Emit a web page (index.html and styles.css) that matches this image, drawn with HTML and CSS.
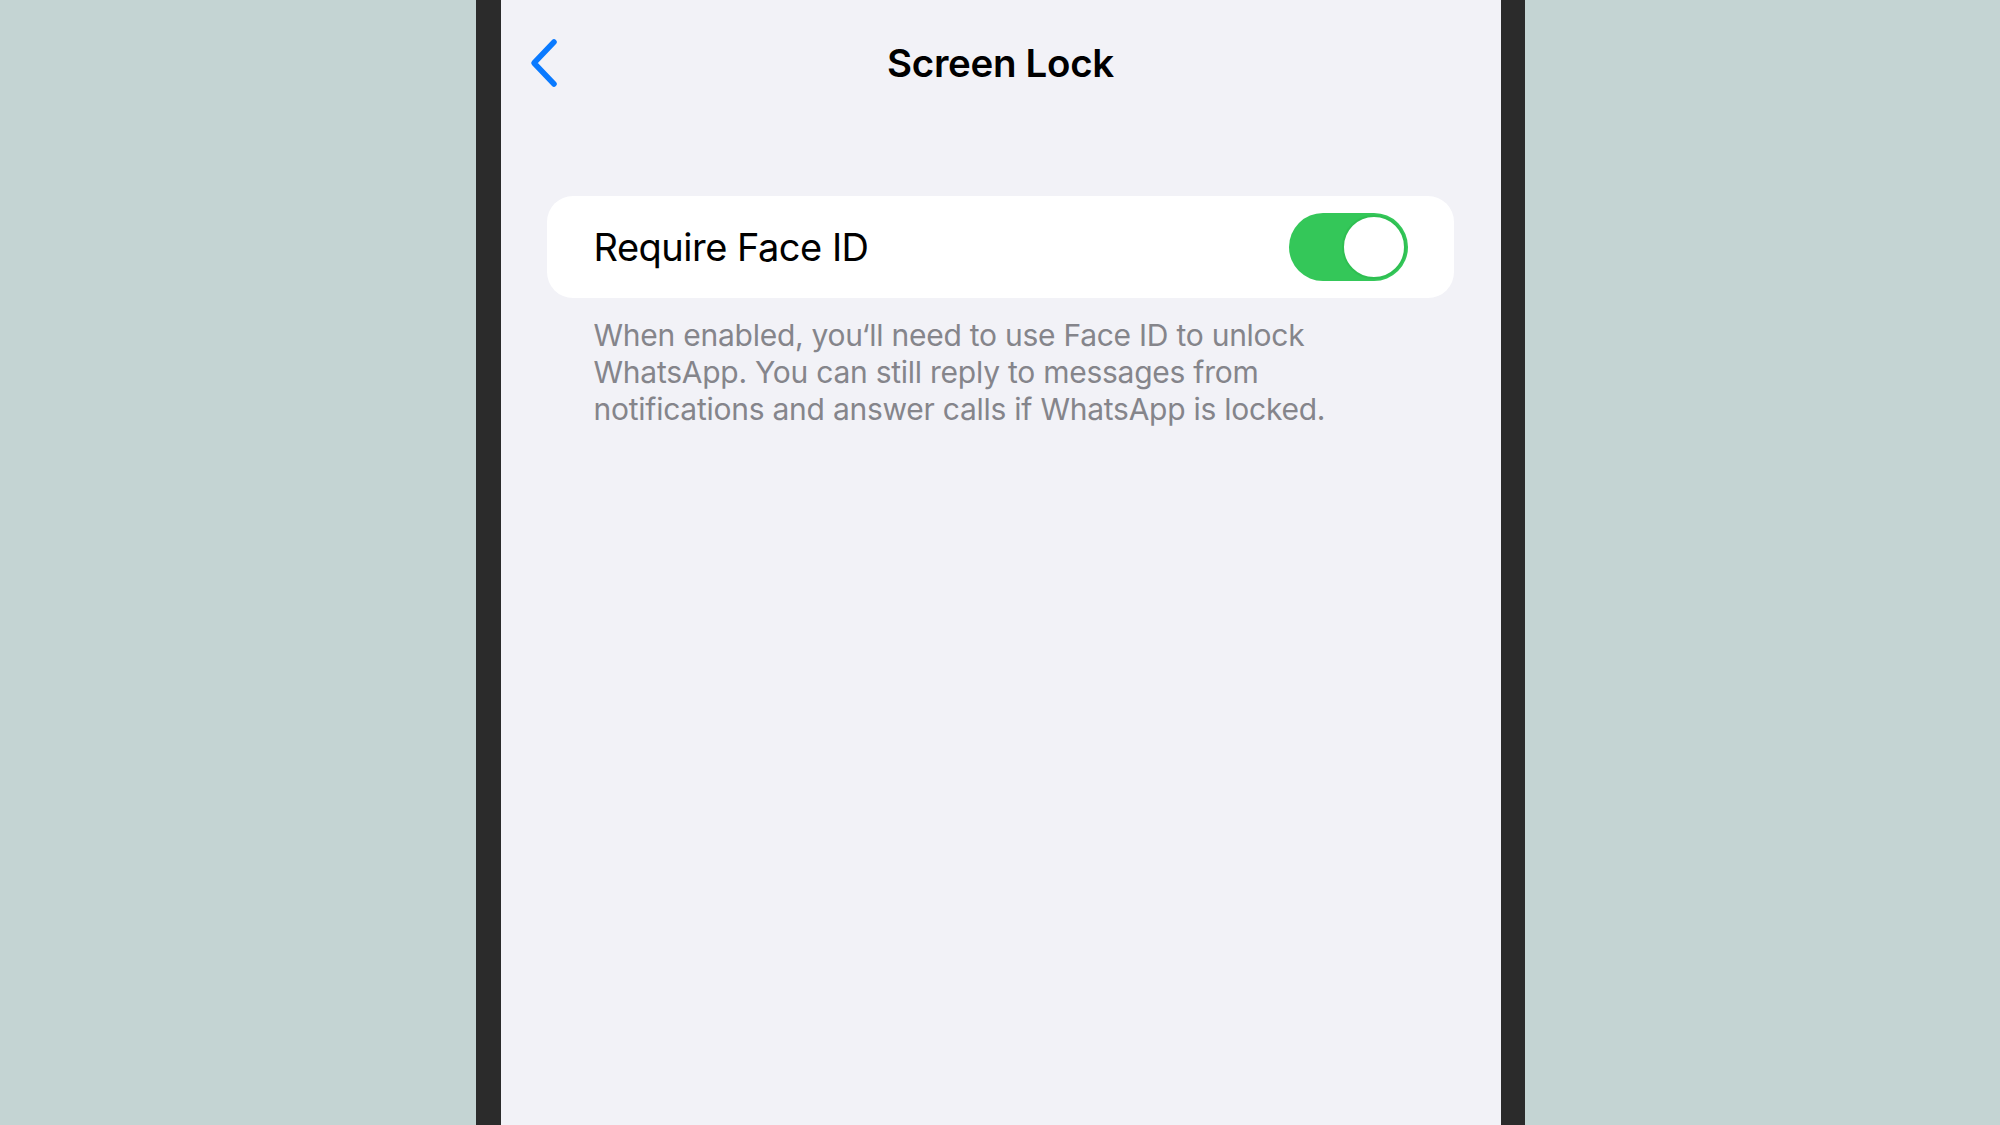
FILE: index.html
```html
<!DOCTYPE html>
<html lang="en">
<head>
<meta charset="utf-8">
<title>Screen Lock</title>
<link rel="stylesheet" href="styles.css">
</head>
<body>
<div class="stage">
  <div class="phone">
    <div class="screen">
      <header class="nav">
        <div class="nav-left">
          <svg class="back" width="32" height="50" viewBox="0 0 32 50" aria-hidden="true">
            <polyline points="25,4 5,25 25,46" fill="none" stroke="#0a7aff" stroke-width="5.5" stroke-linecap="round" stroke-linejoin="round"/>
          </svg>
        </div>
        <h1 class="title">Screen Lock</h1>
        <div class="nav-right"></div>
      </header>
      <main class="content">
        <div class="card">
          <span class="row-label">Require Face ID</span>
          <div class="toggle on"><div class="knob"></div></div>
        </div>
        <p class="footnote">When enabled, you‘ll need to use Face ID to unlock WhatsApp. You can still reply to messages from notifications and answer calls if WhatsApp is locked.</p>
      </main>
    </div>
  </div>
</div>
</body>
</html>
```
FILE: styles.css
```css
html, body {
  margin: 0;
  padding: 0;
  height: 100%;
}
body {
  background: #c4d4d3;
  font-family: Inter, "Noto Sans", "DejaVu Sans", sans-serif;
  overflow: hidden;
}
.stage {
  display: flex;
  justify-content: center;
  height: 1125px;
}
.phone {
  width: 1000px;
  height: 1125px;
  background: #2b2b2b;
  border-left: 25px solid #2b2b2b;
  border-right: 24px solid #2b2b2b;
}
.screen {
  width: 1000px;
  height: 1125px;
  background: #f2f2f7;
  display: flex;
  flex-direction: column;
}
.nav {
  height: 126px;
  display: grid;
  grid-template-columns: 1fr auto 1fr;
  align-items: center;
}
.nav-left {
  display: flex;
  align-items: center;
  padding-left: 28px;
}
.back {
  display: block;
}
.title {
  margin: 0;
  font-size: 38.5px;
  font-weight: 600;
  color: #000;
  letter-spacing: -0.3px;
}
.content {
  padding: 0 47px 0 46px;
}
.card {
  margin-top: 70px;
  height: 102px;
  background: #ffffff;
  border-radius: 26px;
  display: flex;
  align-items: center;
  justify-content: space-between;
  padding: 0 46px 0 47px;
}
.row-label {
  font-size: 38px;
  color: #000;
  letter-spacing: -0.5px;
}
.toggle {
  width: 119px;
  height: 68px;
  border-radius: 34px;
  background: #34c759;
  position: relative;
}
.knob {
  position: absolute;
  top: 2px;
  right: 2px;
  width: 60px;
  height: 60px;
  border-radius: 50%;
  background: #fff;
  border: 2px solid #2fbf52;
}
.footnote {
  margin: 19px 0 0;
  padding-left: 47px;
  padding-right: 60px;
  font-size: 30px;
  line-height: 37px;
  color: #85858b;
  letter-spacing: -0.25px;
}
```
